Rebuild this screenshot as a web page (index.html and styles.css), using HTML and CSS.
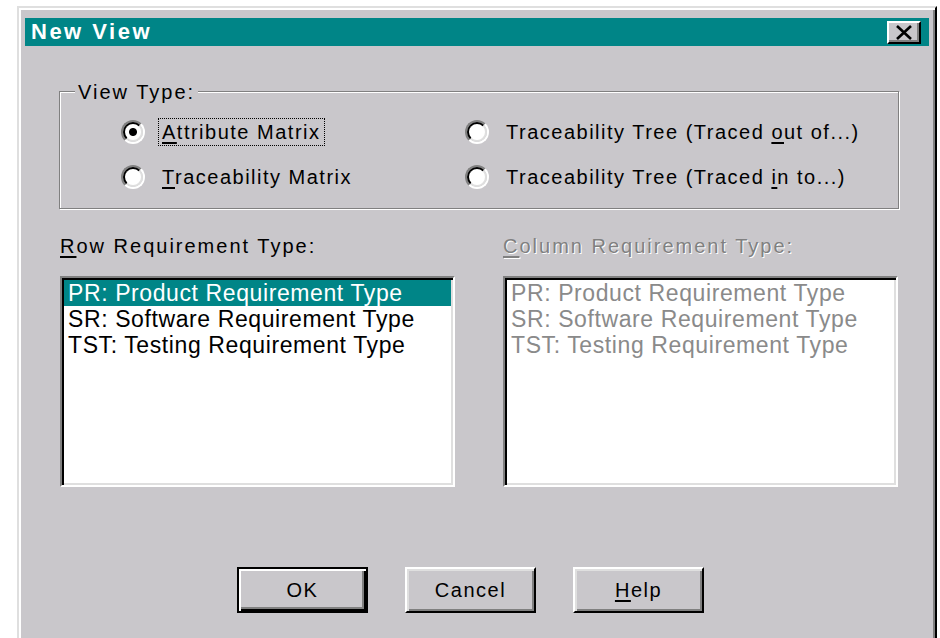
FILE: index.html
```html
<!DOCTYPE html>
<html lang="en">
<head>
<meta charset="utf-8">
<title>New View</title>
<link rel="stylesheet" href="styles.css">
</head>
<body>
<div class="window">
  <div class="titlebar">
    <span class="title">New View</span>
    <button class="close" type="button" aria-label="Close">
      <svg width="18" height="15" viewBox="0 0 18 15"><path d="M2 1 L16 14 M16 1 L2 14" stroke="#000" stroke-width="2.6" fill="none"/></svg>
    </button>
  </div>
  <div class="client">
    <div class="group">
      <div class="legend">View Type:</div>
      <div class="options">
        <label class="option"><span class="radio checked"></span><span class="text focus"><u>A</u>ttribute Matrix</span></label>
        <label class="option"><span class="radio"></span><span class="text">Traceability Tree (Traced <u>o</u>ut of...)</span></label>
        <label class="option"><span class="radio"></span><span class="text"><u>T</u>raceability Matrix</span></label>
        <label class="option"><span class="radio"></span><span class="text">Traceability Tree (Traced <u>i</u>n to...)</span></label>
      </div>
    </div>
    <div class="lists">
      <div class="field">
        <div class="label"><u>R</u>ow Requirement Type:</div>
        <ul class="listbox">
          <li class="selected">PR: Product Requirement Type</li>
          <li>SR: Software Requirement Type</li>
          <li>TST: Testing Requirement Type</li>
        </ul>
      </div>
      <div class="field disabled">
        <div class="label"><u>C</u>olumn Requirement Type:</div>
        <ul class="listbox">
          <li>PR: Product Requirement Type</li>
          <li>SR: Software Requirement Type</li>
          <li>TST: Testing Requirement Type</li>
        </ul>
      </div>
    </div>
    <div class="buttons">
      <button class="btn default" type="button">OK</button>
      <button class="btn" type="button">Cancel</button>
      <button class="btn" type="button"><u>H</u>elp</button>
    </div>
  </div>
</div>
</body>
</html>
```

FILE: styles.css
```css
html, body {
  margin: 0;
  padding: 0;
  overflow: hidden;
  background: #ffffff;
  font-family: "Liberation Sans", Arial, sans-serif;
}

/* dialog frame */
.window {
  margin: 6px 0 0 17px;
  width: 920px;
  height: 660px;
  box-sizing: border-box;
  background: #c9c7cb;
  border: 2px solid;
  border-color: #dfdfdf #000 #000 #dfdfdf;
  box-shadow: inset 2px 2px #fff, inset -2px -2px #808080;
  padding: 10px 6px 0;
}

.titlebar {
  height: 28px;
  background: #008587;
  display: flex;
  align-items: center;
  justify-content: space-between;
  padding: 0 8px 0 6px;
}

.title {
  color: #fff;
  font-weight: bold;
  font-size: 22px;
  letter-spacing: 2.5px;
}

.close {
  width: 34px;
  height: 23px;
  box-sizing: border-box;
  padding: 0;
  background: #c9c7cb;
  border: 2px solid;
  border-color: #fff #000 #000 #fff;
  box-shadow: inset -2px -2px #808080;
  display: flex;
  align-items: center;
  justify-content: center;
}

.client {
  padding: 0 30px 0 34px;
}

/* etched group box */
.group {
  margin-top: 45px;
  border: 1px solid #808080;
  box-shadow: inset 1px 1px #fff, 1px 1px #fff;
  padding: 0 0 17px 0;
}

.legend {
  width: fit-content;
  margin: -12px 0 0 15px;
  padding: 0 3px;
  background: #c9c7cb;
  font-size: 20px;
  letter-spacing: 2px;
  line-height: 24px;
}

.options {
  display: grid;
  grid-template-columns: 344px auto;
  row-gap: 17px;
  margin: 14px 0 0 61px;
}

.option {
  display: flex;
  align-items: center;
  height: 28px;
  font-size: 20px;
  letter-spacing: 1.5px;
}

.radio {
  flex: none;
  width: 24px;
  height: 24px;
  box-sizing: border-box;
  border-radius: 50%;
  border: 2px solid;
  border-color: #808080 #fff #fff #808080;
  margin-right: 13px;
}

.radio::before {
  content: "";
  display: block;
  width: 20px;
  height: 20px;
  box-sizing: border-box;
  border-radius: 50%;
  border: 2px solid;
  border-color: #000 #dfdfdf #dfdfdf #000;
  background: #fff;
}

.radio.checked::before {
  background: radial-gradient(circle, #000 0 3.5px, #fff 4.5px);
}

.text {
  padding: 2px 3px;
  border: 1px dotted transparent;
  line-height: 22px;
}

.text.focus {
  border-color: #000;
}

u {
  text-decoration-thickness: 2px;
  text-underline-offset: 3px;
}

/* requirement type lists */
.lists {
  display: grid;
  grid-template-columns: 395px 395px;
  column-gap: 48px;
  margin: 25px 0 0 1px;
}

.label {
  font-size: 20px;
  letter-spacing: 2px;
  line-height: 24px;
  margin-bottom: 18px;
}

.listbox {
  height: 211px;
  box-sizing: border-box;
  margin: 0;
  padding: 2px;
  list-style: none;
  background: #fff;
  border: 2px solid;
  border-color: #808080 #fff #fff #808080;
  box-shadow: inset 2px 2px #000, inset -2px -2px #dfdfdf;
  font-size: 23px;
  letter-spacing: 0.6px;
}

.listbox li {
  line-height: 26px;
  padding-left: 4px;
  white-space: nowrap;
}

.listbox li.selected {
  background: #008587;
  color: #fff;
}

.disabled .label {
  color: #808080;
  text-shadow: 1px 1px 0 #fff;
}

.disabled .listbox li {
  color: #8a8a8a;
}

/* command buttons */
.buttons {
  display: flex;
  gap: 37px;
  margin-top: 80px;
  padding-left: 178px;
}

.btn {
  width: 131px;
  height: 46px;
  box-sizing: border-box;
  padding: 0;
  background: #c9c7cb;
  color: #000;
  font-family: "Liberation Sans", Arial, sans-serif;
  font-size: 20px;
  letter-spacing: 1.5px;
  border: 2px solid;
  border-color: #fff #000 #000 #fff;
  box-shadow: inset 2px 2px #dfdfdf, inset -2px -2px #808080;
}

.btn.default {
  border-color: #000;
  box-shadow: inset 2px 2px #fff, inset -2px -2px #000, inset -4px -4px #808080;
}
```
